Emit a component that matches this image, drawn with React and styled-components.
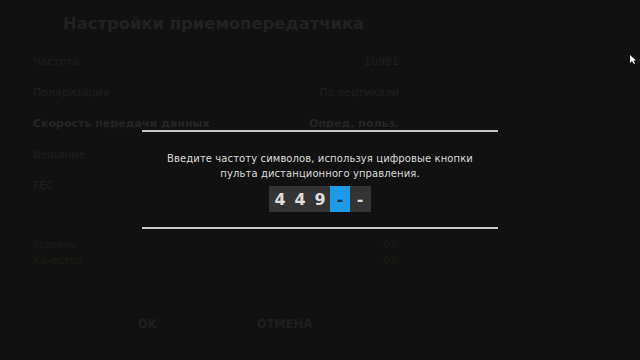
import React from "react";
import styled, { createGlobalStyle } from "styled-components";

const Global = createGlobalStyle`
  html, body { margin: 0; padding: 0; background: #111111; }
  body { font-family: "DejaVu Sans", "Noto Sans", sans-serif; }
`;

const Screen = styled.div`
  position: relative;
  width: 640px;
  height: 360px;
  overflow: hidden;
  background: #111111;
`;

const Menu = styled.div`
  display: flex;
  flex-direction: column;
  width: 366px;
  padding: 13px 0 0 33px;
`;

const Title = styled.h1`
  margin: 0 0 11px 30px;
  font-size: 16.4px;
  line-height: 22px;
  font-weight: bold;
  color: #222222;
`;

const Row = styled.div`
  display: flex;
  justify-content: space-between;
  align-items: center;
  height: 31px;
  font-size: 11px;
  font-weight: ${(p) => (p.$bold ? "bold" : "normal")};
  color: ${(p) => (p.$bold ? "#252525" : "#1f1f1f")};
`;

const Meters = styled.div`
  display: flex;
  flex-direction: column;
  margin-top: 37px;
  gap: 2px;
`;

const Meter = styled.div`
  display: flex;
  justify-content: space-between;
  font-size: 10px;
  line-height: 14px;
  color: ${(p) => p.$color};
`;

const Buttons = styled.div`
  display: flex;
  gap: 100px;
  margin: 49px 0 0 105px;
`;

const Btn = styled.div`
  font-size: 11.5px;
  font-weight: bold;
  color: #1f1f1f;
`;

const Dialog = styled.div`
  position: absolute;
  left: 142px;
  top: 130px;
  width: 356px;
  display: flex;
  flex-direction: column;
  align-items: center;
`;

const Rule = styled.div`
  align-self: stretch;
  height: 2px;
  background: #c8c8c8;
`;

const Message = styled.p`
  margin: 19px 0 5px;
  text-align: center;
  font-size: 10px;
  letter-spacing: 0.1px;
  line-height: 15px;
  color: #dcdcdc;
  white-space: nowrap;
`;

const DigitBox = styled.div`
  display: flex;
  background: #343434;
  padding: 0 1px;
  margin-bottom: 15px;
`;

const Cell = styled.div`
  width: 20px;
  height: 26px;
  display: flex;
  align-items: center;
  justify-content: center;
  font-size: 16px;
  font-weight: bold;
  color: ${(p) => (p.$active ? "#0c2a40" : "#dedede")};
  background: ${(p) => (p.$active ? "#1d9be8" : "transparent")};
`;

const Cursor = styled.svg`
  position: absolute;
  left: 630px;
  top: 55px;
`;

const rows = [
  ["Частота", "10981"],
  ["Поляризация", "По вертикали"],
  ["Скорость передачи данных", "Опред. польз.", true],
  ["Вещание", ""],
  ["FEC", ""],
];

const digits = ["4", "4", "9", "-", "-"];

export default function App() {
  return (
    <Screen>
      <Global />
      <Menu>
        <Title>Настройки приемопередатчика</Title>
        {rows.map(([l, v, b]) => (
          <Row key={l} $bold={b}>
            <span>{l}</span>
            <span>{v}</span>
          </Row>
        ))}
        <Meters>
          <Meter $color="#1c1c1c">
            <span>Уровень</span>
            <span>0%</span>
          </Meter>
          <Meter $color="#1d1d14">
            <span>Качество</span>
            <span>0%</span>
          </Meter>
        </Meters>
        <Buttons>
          <Btn>OK</Btn>
          <Btn>ОТМЕНА</Btn>
        </Buttons>
      </Menu>
      <Dialog>
        <Rule />
        <Message>
          Введите частоту символов, используя цифровые кнопки
          <br />
          пульта дистанционного управления.
        </Message>
        <DigitBox>
          {digits.map((d, i) => (
            <Cell key={i} $active={i === 3}>
              {d}
            </Cell>
          ))}
        </DigitBox>
        <Rule />
      </Dialog>
      <Cursor width="8" height="10" viewBox="0 0 8 10">
        <path d="M0 0 L0 8 L2 6 L4 9 L5 8.5 L3.5 5.5 L6 5.5 Z" fill="#ffffff" />
      </Cursor>
    </Screen>
  );
}
